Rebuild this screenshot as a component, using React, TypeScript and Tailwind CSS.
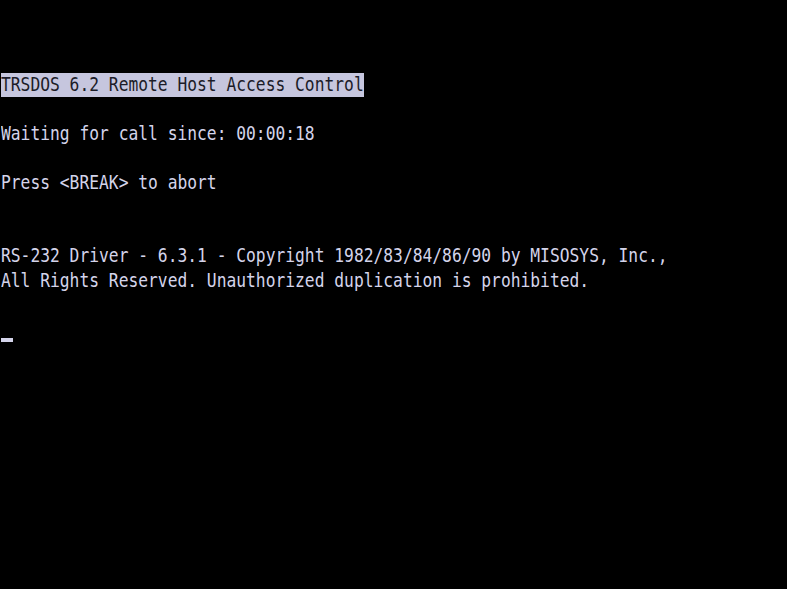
const lines: string[] = [
  '',
  'Waiting for call since: 00:00:18',
  '',
  'Press <BREAK> to abort',
  '',
  '',
  'RS-232 Driver - 6.3.1 - Copyright 1982/83/84/86/90 by MISOSYS, Inc.,',
  'All Rights Reserved. Unauthorized duplication is prohibited.',
  '',
];

export default function App() {
  return (
    <div className="h-[589px] w-[787px] overflow-hidden bg-black pt-[73px] pl-[1px] font-['DejaVu_Sans_Mono',monospace] text-[16.3px] text-[#d4d4ea]">
      {/* Title bar, reverse video */}
      <div className="flex h-6 items-center">
        <span className="flex h-6 items-center bg-[#c6c6de] text-[#1c1c28] whitespace-pre">
          <span className="scale-y-[1.2]">TRSDOS 6.2 Remote Host Access Control</span>
        </span>
      </div>

      {lines.map((line, i) => (
        <div key={i} className="flex h-[24.5px] items-center whitespace-pre">
          <span className="scale-y-[1.2]">{line}</span>
        </div>
      ))}

      {/* Cursor */}
      <div className="flex h-[24.5px] items-end">
        <div className="h-[4px] w-[12px] bg-[#d4d4ea]" />
      </div>
    </div>
  );
}
